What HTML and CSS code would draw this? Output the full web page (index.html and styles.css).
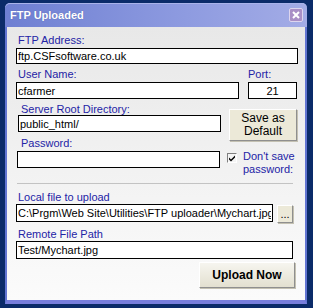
FILE: index.html
```html
<!DOCTYPE html>
<html lang="en">
<head>
  <meta charset="UTF-8" />
  <title>FTP Uploaded</title>
  <link rel="stylesheet" href="styles.css">
</head>
<body>
  <div class="window">
    <div class="titlebar">
      <span class="title">FTP Uploaded</span>
      <span class="close">
        <svg width="12" height="12" viewBox="0 0 12 12"><path d="M3 3 L9 9 M9 3 L3 9" stroke="#fff" stroke-width="2"/></svg>
      </span>
    </div>
    <div class="content">
      <label class="lbl">FTP Address:</label>
      <input class="field field-addr" value="ftp.CSFsoftware.co.uk">

      <div class="row row-user">
        <div class="col col-user">
          <label class="lbl">User Name:</label>
          <input class="field" value="cfarmer">
        </div>
        <div class="col col-port">
          <label class="lbl lbl-port">Port:</label>
          <input class="field port" value="21">
        </div>
      </div>

      <div class="row row-server">
        <div class="col col-server">
          <label class="lbl lbl-server">Server Root Directory:</label>
          <input class="field" value="public_html/">
          <label class="lbl lbl-pass">Password:</label>
          <input class="field field-pass" type="password" value="">
        </div>
        <div class="col col-side">
          <button class="btn btn-save">Save as<br>Default</button>
          <div class="check">
            <span class="box">
              <svg width="8" height="8" viewBox="0 0 8 8"><path d="M1 3.5 L3 5.5 L7 1.5 L7 3.5 L3 7.5 L1 5.5 Z" fill="#000"/></svg>
            </span>
            <span class="check-text">Don't save<br>password:</span>
          </div>
        </div>
      </div>

      <div class="sep"></div>

      <label class="lbl lbl-local">Local file to upload</label>
      <div class="row row-local">
        <input class="field field-local" value="C:\Prgm\Web Site\Utilities\FTP uploader\Mychart.jpg">
        <button class="btn btn-browse">...</button>
      </div>

      <label class="lbl lbl-remote">Remote File Path</label>
      <input class="field field-remote" value="Test/Mychart.jpg">

      <button class="btn btn-upload">Upload Now</button>
    </div>
  </div>
</body>
</html>
```

FILE: styles.css
```css
body {
  margin: 0;
  background: #0b2b69;
  font-family: 'Liberation Sans', Arial, sans-serif;
  font-size: 11px;
  height: 308px;
  overflow: hidden;
}
.window {
  margin-left: 5px;
  padding-top: 3px;
  width: 302px;
}
.titlebar {
  height: 24px;
  display: flex;
  align-items: center;
  justify-content: space-between;
  background: linear-gradient(to right, #6e7fd2, #8e9be0 60%, #a3ace6);
  border-radius: 5px 5px 0 0;
  box-shadow: inset 0 1px 0 #a9b3ea;
}
.title {
  color: #fff;
  font-weight: bold;
  font-size: 11px;
  padding-left: 5px;
  padding-bottom: 1px;
  text-shadow: 0 0 1px #5060a8;
}
.close {
  width: 12px;
  height: 12px;
  margin-right: 4px;
  background: #a98fc6;
  border: 1px solid #ddd6ef;
  border-radius: 2px;
  display: flex;
}
.content {
  height: 273px;
  box-sizing: border-box;
  padding: 7px 0 0 9px;
  border-left: 2px solid #6275d2;
  border-right: 2px solid #6275d2;
  border-bottom: 4px solid #787edc;
  height: 277px;
  background: linear-gradient(#e8e8e8, #fbfbfb);
}
.lbl {
  display: block;
  color: #2323a6;
  line-height: 13px;
  padding-left: 2px;
}
.field {
  display: block;
  box-sizing: border-box;
  height: 17px;
  margin: 1px 0 0 0;
  padding: 0 1px;
  border: 1px solid #000;
  background: #fff;
  font-family: 'Liberation Sans', Arial, sans-serif;
  font-size: 11px;
  color: #000;
  outline: none;
}
.field-addr {
  width: 282px;
  height: 16px;
}
.row {
  display: flex;
}
.row-user {
  margin-top: 4px;
}
.col-user {
  width: 223px;
}
.col-user .field {
  width: 223px;
}
.col-port {
  margin-left: 9px;
  width: 49px;
}
.lbl-port {
  padding-left: 0;
}
.port {
  width: 49px;
  text-align: center;
}
.row-server {
  margin-top: 4px;
}
.col-server {
  margin-left: 2px;
  width: 203px;
}
.lbl-server {
  line-height: 12px;
  padding-left: 3px;
}
.col-server .field {
  width: 203px;
  margin-top: 0;
}
.lbl-pass {
  margin-top: 5px;
  padding-left: 3px;
}
.col-server .field-pass {
  margin: 1px 0 0 -1px;
}
.col-side {
  margin-left: 8px;
}
.btn {
  display: block;
  box-sizing: border-box;
  background: #ece9d8;
  border: 1px solid;
  border-color: #fff #8f8f8f #8f8f8f #fff;
  box-shadow: 1px 1px 0 #c4c1b2;
  font-family: 'Liberation Sans', Arial, sans-serif;
  color: #000;
  padding: 0;
}
.btn-save {
  margin-top: 6px;
  width: 68px;
  height: 32px;
  font-size: 12px;
  line-height: 13px;
}
.check {
  display: flex;
  margin: 9px 0 0 -2px;
}
.box {
  width: 10px;
  height: 10px;
  margin-top: 3px;
  box-sizing: border-box;
  border: 1px solid;
  border-color: #808080 #fff #fff #808080;
  background: #f4f4f4;
  display: flex;
  align-items: center;
  justify-content: center;
}
.check-text {
  margin-left: 6px;
  color: #2323a6;
  line-height: 13px;
}
.sep {
  margin: 7px 0 0 1px;
  width: 276px;
  height: 1px;
  background: #c3c3c3;
}
.lbl-local {
  margin-top: 7px;
}
.field-local {
  width: 257px;
  height: 18px;
  margin-top: 0;
}
.btn-browse {
  margin: 1px 0 0 4px;
  width: 16px;
  height: 18px;
  font-size: 11px;
  line-height: 10px;
}
.lbl-remote {
  margin-top: 5px;
}
.field-remote {
  width: 277px;
  height: 18px;
  margin-top: 0;
}
.btn-upload {
  margin: 3px 0 0 183px;
  width: 96px;
  height: 26px;
  font-size: 12px;
  font-weight: bold;
  background: linear-gradient(#f6f5ef, #e3e0d0);
}
```
